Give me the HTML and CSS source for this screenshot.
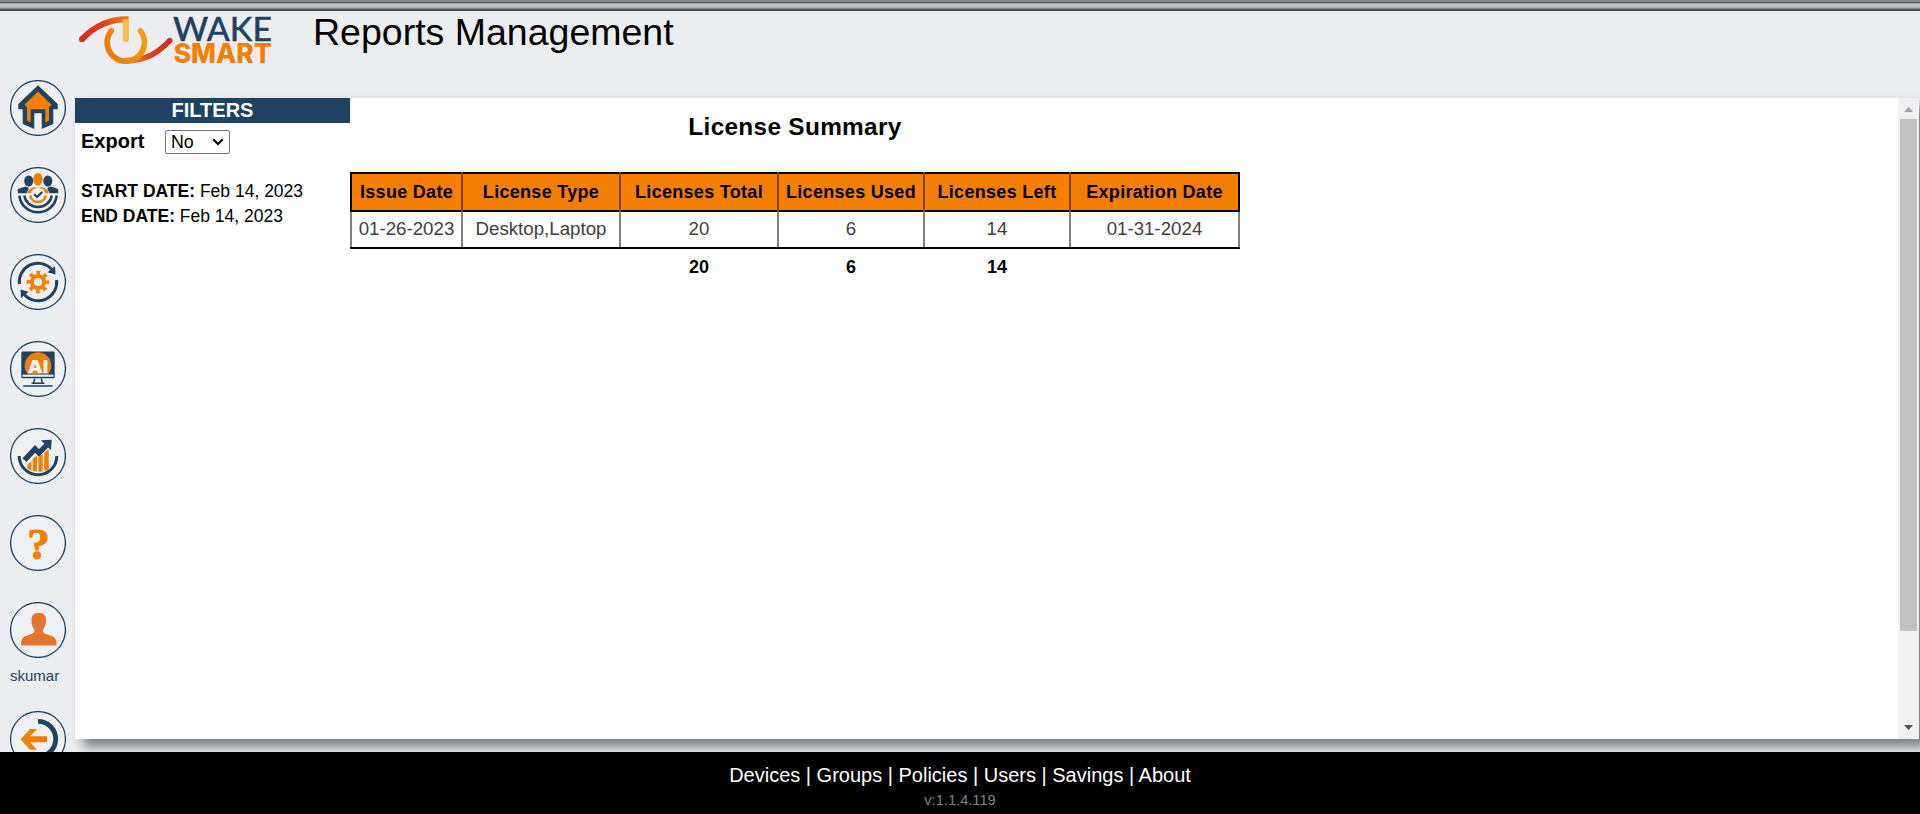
FILE: index.html
```html
<!DOCTYPE html>
<html lang="en">
<head>
<meta charset="utf-8">
<title>Reports Management</title>
<link rel="stylesheet" href="styles.css">
</head>
<body>
<div class="page">
  <div class="topbar"></div>
  <header class="header">
    <svg class="logo" viewBox="225 36 600 168">
      <defs>
        <linearGradient id="g1" gradientUnits="userSpaceOnUse" x1="240" y1="118" x2="385" y2="56"><stop offset="0" stop-color="#d82a20"/><stop offset=".5" stop-color="#dd3f1e"/><stop offset="1" stop-color="#f47e00"/></linearGradient>
        <linearGradient id="g2" gradientUnits="userSpaceOnUse" x1="390" y1="180" x2="515" y2="120"><stop offset="0" stop-color="#f47e00"/><stop offset=".5" stop-color="#dc3a20"/><stop offset="1" stop-color="#d82a20"/></linearGradient>
        <linearGradient id="g3" gradientUnits="userSpaceOnUse" x1="320" y1="160" x2="440" y2="90"><stop offset="0" stop-color="#f07800"/><stop offset="1" stop-color="#f9a21c"/></linearGradient>
      </defs>
      <path d="M246 118Q304 56 386 58" fill="none" stroke="url(#g1)" stroke-width="18"/>
      <circle cx="246" cy="118" r="9" fill="#d82a20"/>
      <path d="M377 182C440 182 477 156 509 122" fill="none" stroke="url(#g2)" stroke-width="17" stroke-linecap="round"/>
      <path d="M334 92A56 56 0 1 0 421 92" fill="none" stroke="url(#g3)" stroke-width="17" stroke-linecap="round"/>
      <path d="M368 58H387V117Q387 126 377 126Q368 126 368 117Z" fill="#fdbd4d"/>
      <text class="logo-wake" x="519" y="122" textLength="297" lengthAdjust="spacingAndGlyphs">WAKE</text>
      <text class="logo-smart" x="521" y="190" textLength="294" lengthAdjust="spacingAndGlyphs">SMART</text>
    </svg>
    <h1 class="title">Reports Management</h1>
  </header>
  <div class="main">
    <nav class="sidebar">
      <svg class="icon" viewBox="0 0 56 56"><circle class="ring" cx="28" cy="28" r="27.4"/>
        <path class="navy" d="M28 5.3L47.7 24V29.3H43.3V44L31.7 49V33.3H24.3V49L12.7 44V29.3H8.3V24Z"/>
        <path class="orange" d="M28 11.5L41.5 24.7L39 27V40.5L35.3 42.5V29.3H20.7V42.5L17 40.5V27L14.5 24.7Z"/></svg>
      <svg class="icon" viewBox="0 0 56 56"><circle class="ring" cx="28" cy="28" r="27.4"/>
        <ellipse class="navy" cx="18.7" cy="14" rx="4.5" ry="5.6"/><ellipse class="navy" cx="37.8" cy="14" rx="4.5" ry="5.6"/>
        <path class="navy" d="M7.8 26.3V22L15.5 19.5L19 21L16.5 26.3ZM48.2 26.3V22L40.5 19.5L37 21L39.5 26.3Z"/>
        <ellipse class="orange" cx="28" cy="12.3" rx="4.7" ry="6.4"/>
        <path class="orange" d="M17.3 26.3Q17.3 22.5 24 20L28 21L32 20Q38.7 22.5 38.7 26.3H35.3A7.5 7 0 0 0 20.7 26.3Z"/>
        <path class="orange-line" d="M20.3 28.5A7.8 7.8 0 0 0 35.7 28.5" stroke-width="2.5"/>
        <path class="navy-line" d="M14.3 28.5A13.8 13 0 0 0 41.7 28.5M9.3 28.5A18.8 18.8 0 0 0 46.7 28.5" stroke-width="2.5"/>
        <path class="navy-line" d="M24.2 27.2L27 30L32.2 25" stroke-width="2.2"/></svg>
      <svg class="icon" viewBox="0 0 56 56"><circle class="ring" cx="28" cy="28" r="27.4"/>
        <g id="turn"><path class="navy-line" d="M9.4 30A18.6 18.6 0 0 1 41.5 15.2" stroke-width="3"/><path class="navy" d="M45 12L45.5 20.5L37.5 18.2Z"/></g>
        <use href="#turn" transform="rotate(180 28 28)"/>
        <circle class="orange-line" cx="28" cy="28" r="9.4" stroke-width="3.8" stroke-dasharray="3.7 3.683" stroke-dashoffset="1.85"/>
        <circle class="orange-line" cx="28" cy="28" r="6.1" stroke-width="4"/></svg>
      <svg class="icon" viewBox="0 0 56 56"><circle class="ring" cx="28" cy="28" r="27.4"/>
        <rect class="navy" x="11.3" y="10.6" width="33.4" height="26.6" rx="1.3"/>
        <path class="orange" d="M18 33.3A13.3 13.3 0 1 1 38 33.3Z"/>
        <path fill="#ecedf1" d="M12.5 33.6H43.5V35.8H12.5Z"/>
        <text class="ai" x="17.8" y="31.8" textLength="20.5" lengthAdjust="spacingAndGlyphs">AI</text>
        <path class="navy-line" d="M24.8 37.5L23.5 42.2H32.5L31.2 37.5M21.5 42.3H34.5M13.2 44.9H42.7" stroke-width="1.5"/></svg>
      <svg class="icon" viewBox="0 0 56 56"><circle class="ring" cx="28" cy="28" r="27.4"/>
        <path class="navy-line" d="M9.2 28A18.8 18.8 0 0 0 46.8 28" stroke-width="3"/>
        <path class="orange" d="M17.3 37L21.4 33V42.7L17.3 40.5ZM22.7 31L27 27.5V43.6L22.7 43.3ZM28.4 29L32.7 26V43.5L28.4 43.8ZM34.2 25L38.7 21V41.5L34.2 43Z"/>
        <path class="navy-line" d="M14.5 32.2L25 20.9L29 25L38 15.8" stroke-width="5.4"/>
        <path class="navy" d="M30.8 12.2L41.7 11.8L41 22.3Z"/></svg>
      <svg class="icon" viewBox="0 0 56 56"><circle class="ring" cx="28" cy="28" r="27.4"/>
        <text class="question" x="28.5" y="44" text-anchor="middle">?</text></svg>
      <svg class="icon" viewBox="0 0 56 56"><circle class="ring" cx="28" cy="28" r="27.4"/>
        <path fill="#e2762f" d="M28.5 10.7C34 10.7 36 14 36 18C36 23 34.5 26 33 27.5C32.8 30.5 33.5 31 36 32L43 34.5Q46.7 36 46.7 43.5H11Q11 36 14.5 34.5L21.5 32C24 31 24.5 30.5 24.3 27.5C22.5 25.5 21.5 22 21.5 18C21.5 14 23.5 10.7 28.5 10.7Z"/></svg>
      <span class="user">skumar</span>
      <svg class="icon" viewBox="0 0 56 56"><circle class="ring" cx="28" cy="28" r="27.4"/>
        <path class="navy-line" d="M28 10.3A17.7 17.7 0 0 1 28 45.7" stroke-width="4.8"/>
        <path class="orange" d="M10.7 28.3L20 18H27L20 25.3H37V31.3H20L27 38.8H20Z"/></svg>
    </nav>
    <main class="panel">
      <aside class="filters">
        <h2 class="filters-title">FILTERS</h2>
        <div class="export"><b class="export-label">Export</b>
          <div class="select"><span>No</span><svg width="12" height="8" viewBox="0 0 12 8"><path d="M1.2 1.2L6 6L10.8 1.2" fill="none" stroke="#000" stroke-width="2"/></svg></div>
        </div>
        <div class="dates"><div><b>START DATE:</b> Feb 14, 2023</div><div><b>END DATE:</b> Feb 14, 2023</div></div>
      </aside>
      <section class="report">
        <h3 class="report-title">License Summary</h3>
        <table class="table">
          <colgroup><col class="c1"><col class="c2"><col class="c3"><col class="c4"><col class="c5"><col class="c6"></colgroup>
          <thead><tr><th>Issue Date</th><th>License Type</th><th>Licenses Total</th><th>Licenses Used</th><th>Licenses Left</th><th>Expiration Date</th></tr></thead>
          <tbody><tr><td>01-26-2023</td><td>Desktop,Laptop</td><td>20</td><td>6</td><td>14</td><td>01-31-2024</td></tr></tbody>
          <tfoot><tr><td></td><td></td><td>20</td><td>6</td><td>14</td><td></td></tr></tfoot>
        </table>
      </section>
      <div class="scrollbar">
        <svg class="arrow" viewBox="0 0 21 21"><path d="M6 14L10.5 9L15 14Z" fill="#a3a3a3"/></svg>
        <div class="thumb"></div>
        <svg class="arrow" viewBox="0 0 21 21"><path d="M6 7L10.5 12L15 7Z" fill="#505050"/></svg>
      </div>
    </main>
  </div>
  <footer class="footer">
    <div class="links">Devices | Groups | Policies | Users | Savings | About</div>
    <div class="version">v:1.1.4.119</div>
  </footer>
</div>
</body>
</html>
```
FILE: styles.css
```css
* { box-sizing: border-box; }
body {
  margin: 0;
  background: #ecedf1;
  color: #000;
  font-family: "Liberation Sans", Arial, sans-serif;
  overflow: hidden;
}
h1, h2, h3 { margin: 0; }
.page { display: flex; flex-direction: column; height: 814px; }
.topbar {
  flex: none;
  height: 11px;
  background: linear-gradient(#8d918d 0 1px, #818481 1px 2px, #5c5f5c 2px 3px, #a0a0a0 3px 4px, #c8c8c8 4px 6px, #bcbcbc 6px 7px, #a8a8a8 7px 8px, #858585 8px 9px, #5d5b5d 9px 10px, #3f3b3f 10px 11px);
}
.header { flex: none; display: flex; height: 69px; padding-left: 75px; }
.logo { width: 200px; height: 56px; margin-top: 1px; overflow: visible; }
.logo-wake { font: 500 97px Lato, sans-serif; fill: #1f4261; stroke: #1f4261; stroke-width: 1; }
.logo-smart { font: 800 80px Inter, sans-serif; fill: #f47e00; }
.title { margin-left: 38px; font-size: 37.5px; line-height: 42px; font-weight: 400; white-space: nowrap; }
.main { flex: none; display: flex; height: 672px; overflow: hidden; }
.sidebar { width: 75px; padding-left: 10px; display: flex; flex-direction: column; }
.icon { flex: none; display: block; width: 56px; height: 56px; margin-bottom: 31px; }
.ring { fill: #eef0f4; stroke: #1f4261; stroke-width: 1.3; }
.navy { fill: #1f4261; }
.orange { fill: #f47e00; }
.navy-line { fill: none; stroke: #1f4261; }
.orange-line { fill: none; stroke: #f47e00; }
.ai { font: 900 18px Inter, sans-serif; fill: #f4f4f6; }
.question { font: bold 45px "Liberation Serif", serif; fill: #f47e00; stroke: #f47e00; stroke-width: 1; }
.user { flex: none; font-size: 15px; line-height: 18px; height: 53px; margin-top: -22px; margin-bottom: -9px; color: #1f4261; }
.panel {
  flex: none;
  display: flex;
  width: 1844px;
  height: 641px;
  margin-top: 18px;
  background: #fff;
  box-shadow: 8px 8px 10px #808080;
}
.filters { width: 275px; }
.filters-title { height: 25px; background: #1f4261; color: #fff; font-size: 20px; line-height: 24px; text-align: center; }
.export { display: flex; align-items: center; height: 38px; padding-left: 6px; font-size: 20px; }
.export-label { width: 84px; margin-top: -1px; }
.select {
  display: flex;
  align-items: center;
  justify-content: space-between;
  width: 65px;
  height: 24px;
  padding: 0 5px;
  border: 1px solid #767676;
  border-radius: 2px;
  font-size: 17.8px;
}
.dates { margin-top: 18px; padding-left: 6px; font-size: 17.5px; line-height: 25px; }
.report { width: 890px; }
.report-title { margin-top: 14px; font-size: 24.4px; letter-spacing: .3px; line-height: 30px; text-align: center; }
.table { margin-top: 30px; width: 890px; table-layout: fixed; border-collapse: collapse; font-size: 18px; text-align: center; }
.c1 { width: 111px; }
.c2, .c3 { width: 158px; }
.c4, .c5 { width: 146px; }
.c6 { width: 169px; }
.table th, .table td { padding: 0; height: 37.5px; }
.table th { padding-top: 2px; background: #f47e00; border-left: 2px solid #7a3f00; border-right: 2px solid #7a3f00; letter-spacing: .3px; white-space: nowrap; }
.table thead tr { border: 2px solid #000; }
.table th:first-child { border-left: 2px solid #000; }
.table th:last-child { border-right: 2px solid #000; }
.table tbody td { border: 2px solid #808080; border-top: 2px solid #000; border-bottom: 2px solid #000; color: #404040; font-size: 18.7px; }
.table tfoot td { font-weight: bold; }
.scrollbar { width: 21px; margin-left: auto; background: #f0f0f0; display: flex; flex-direction: column; }
.arrow { display: block; width: 21px; height: 21px; }
.thumb { width: 17px; height: 512px; margin: 0 2px auto; background: #c1c1c1; }
.footer { position: relative; flex: none; height: 62px; background: #000; color: #fff; text-align: center; }
.links { padding-top: 11px; font-size: 20px; line-height: 24px; }
.version { margin-top: 4px; font-size: 14.67px; line-height: 18px; color: #808080; }
```
